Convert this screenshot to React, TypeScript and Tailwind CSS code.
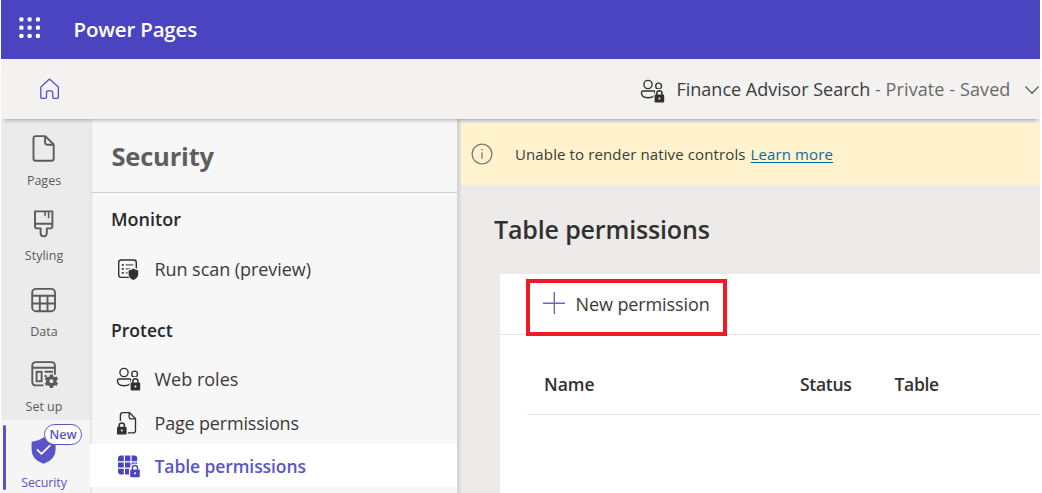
import React from "react";
import type { ReactNode } from "react";

function Lock({ x, y, halo, color = "#323130" }: { x: number; y: number; halo: string; color?: string }) {
  return (
    <g transform={`translate(${x} ${y})`} stroke="none">
      <path d="M-1 4h1.5V3a4.2 4.2 0 0 1 8.6 0v1H11v9H-1z" fill={halo} />
      <path d="M2.4 5V3.4a2.6 2.6 0 0 1 5.2 0V5" fill="none" stroke={color} strokeWidth="1.5" />
      <rect x="0.2" y="4.6" width="9.6" height="7.8" rx="1.2" fill={color} />
      <circle cx="5" cy="8.4" r="1" fill={halo} />
    </g>
  );
}

function WaffleIcon() {
  const stops = [2.4, 10.6, 18.9];
  return (
    <svg width="22" height="22" viewBox="0 0 22 22" fill="#fff">
      {stops.map((y) => stops.map((x) => <rect key={`${x}-${y}`} x={x - 2.1} y={y - 2.1} width="4.2" height="4.2" rx="1.5" />))}
    </svg>
  );
}

function HomeIcon() {
  return (
    <svg width="20" height="22" viewBox="0 0 20 22" fill="none" stroke="#5650c0" strokeWidth="1.3" strokeLinejoin="round">
      <path d="M9 1.5Q9.5 1 10 1.5L17.8 8.4Q18.4 9 18.4 9.8V19Q18.4 20.3 17.1 20.3H13.9Q12.7 20.3 12.7 19V14.6Q12.7 12.8 11 12.8H8.2Q6.5 12.8 6.5 14.6V19Q6.5 20.3 5.3 20.3H2.1Q.8 20.3.8 19V9.8Q.8 9 1.4 8.4Z" />
    </svg>
  );
}

function PeopleLockIcon({ halo }: { halo: string }) {
  return (
    <svg width="26" height="25" viewBox="0 0 26 25" fill="none" stroke="#323130" strokeWidth="1.35">
      <circle cx="8" cy="5.5" r="4.1" />
      <circle cx="18.6" cy="7" r="2.9" />
      <path d="M3.2 12h10.2q1.7 0 1.7 1.8 0 4.9-7 4.9-6.7 0-6.7-4.9Q1.4 12 3.2 12Z" />
      <Lock x={14.4} y={11} halo={halo} />
    </svg>
  );
}

function PageLockIcon() {
  return (
    <svg width="26" height="25" viewBox="0 0 26 25" fill="none" stroke="#323130" strokeWidth="1.35" strokeLinejoin="round">
      <path d="M4.4 10V4.2q0-2.6 2.6-2.6h6.4l6.1 6.1v11.8q0 2.4-2.4 2.4h-5.5" />
      <path d="M13.2 1.8v4.4q0 1.7 1.7 1.7h4.4" />
      <Lock x={0.8} y={11.2} halo="#f7f7f7" />
    </svg>
  );
}

function TableLockIcon() {
  return (
    <svg width="26" height="25" viewBox="0 0 26 25">
      <rect x="2" y="1.4" width="19.2" height="19" rx="3" fill="#4b44c0" />
      <path d="M8.4 1v20M15 1v20M2 7.8h20M2 14.2h20" stroke="#fff" strokeWidth="1.2" />
      <Lock x={14} y={10.8} halo="#ffffff" color="#4b44c0" />
    </svg>
  );
}

function ScanIcon() {
  return (
    <svg width="26" height="25" viewBox="0 0 26 25" fill="none" stroke="#323130" strokeWidth="1.4" strokeLinecap="round">
      <rect x="2.7" y="3" width="17.6" height="17.4" rx="2.6" />
      <path d="M6.6 7.9h.4M6.6 11.900h.4M6.600 15.900h.4" strokeWidth="1.800" />
      <path d="M10.200 7.900h6.600M10.200 11.900h4M10.200 15.900h1.400" stroke="#605e5c" />
      <path d="M17.400 10.400 23 12.600v4.500q0 4.600-5.600 6.900-5.600-2.300-5.600-6.900v-4.500Z" fill="#f7f7f7" stroke="none" />
      <path d="M17.400 11.600q2.100 1.700 4.800 1.900v3.500q0 4.100-4.800 6.100-4.800-2-4.800-6.100v-3.500q2.700-.2 4.800-1.900Z" fill="#323130" stroke="none" />
    </svg>
  );
}

function PagesIcon() {
  return (
    <svg width="30" height="28" viewBox="0 0 30 28" fill="none" stroke="#5c5b5a" strokeWidth="1.9" strokeLinejoin="round">
      <path d="M6.8 1.1h9.5l8.4 8.4v14q0 2.3-2.300 2.300H6.800q-2.300 0-2.300-2.300V3.400q0-2.300 2.300-2.300Z" />
      <path d="M16.100 1.400v6.200q0 2.100 2.100 2.100h6.200" />
    </svg>
  );
}

function StylingIcon() {
  return (
    <svg width="30" height="28" viewBox="0 0 30 28" fill="none" stroke="#5c5b5a" strokeWidth="1.9" strokeLinejoin="round">
      <path d="M6 1.400h17.400v14.800q0 2.200-2.200 2.200h-3.400v4.900a3.100 3.100 0 0 1-6.200 0v-4.900H8.200Q6 18.400 6 16.200ZM6 13.700h17.400" />
      <path d="M16 1.600v4.100M19.600 1.600v6.600" strokeWidth="1.6" />
    </svg>
  );
}

function DataIcon() {
  return (
    <svg width="30" height="28" viewBox="0 0 30 28" fill="none" stroke="#5c5b5a" strokeWidth="1.9">
      <rect x="3.200" y="2.900" width="22.800" height="22.400" rx="3.800" />
      <path d="M3.200 9.800H26M3.200 17.500H26M10.800 9.800v15.500M18.500 9.800v15.500" />
    </svg>
  );
}

function SetupIcon() {
  return (
    <svg width="30" height="28" viewBox="0 0 30 28" fill="none" stroke="#5c5b5a" strokeWidth="1.9">
      <path d="M14.500 24.400H6.900q-3.600 0-3.600-3.600V4.700q0-3.600 3.600-3.600h15.400q3.600 0 3.600 3.600v9.100M3.300 6.800h22.600" />
      <rect x="7.600" y="10.800" width="5" height="9.400" />
      <path d="M15.600 10.800h8.400M15.600 15h2" />
      <path d="M22.400 13.800v12.800M16.900 17l11 6.400M16.900 23.400l11-6.400" stroke="#ebebeb" strokeWidth="5.500" />
      <path d="M22.400 13.400v13.600M16.500 16.800l11.800 6.800M16.500 23.600l11.800-6.800" strokeWidth="3.400" />
      <circle cx="22.400" cy="20.200" r="3.700" strokeWidth="3.200" />
      <circle cx="22.400" cy="20.200" r="1.900" fill="#ebebeb" stroke="none" />
    </svg>
  );
}

function ShieldIcon() {
  return (
    <svg width="30" height="28" viewBox="0 0 30 28" fill="none">
      <path d="M14.600.2q5.400 4 11.100 4.200.9.1.9 1v7.300q0 9.600-11.400 13.800-.7.3-1.300 0Q2.600 22.300 2.600 12.700V5.400q0-.9.9-1Q9.200 4.200 14.600.2Z" fill="#5b54c8" />
      <path d="m8.400 12.800 4.100 4.100 8.300-8.200" stroke="#fff" strokeWidth="1.7" strokeLinecap="round" strokeLinejoin="round" />
    </svg>
  );
}

function RailItem({ icon, label }: { icon: ReactNode; label: string }) {
  return (
    <a className="flex h-[75.25px] flex-col items-center pr-[3px] pt-[16px] text-[12.5px] leading-[20px] text-[#5c5b5a]">
      {icon}
      <span className="mt-[8px]">{label}</span>
    </a>
  );
}

function PanelRow({ icon, children, className = "" }: { icon: ReactNode; children: ReactNode; className?: string }) {
  return (
    <a className={`flex items-center pl-[26px] text-[18px] text-[#3b3a39] ${className}`}>
      {icon}
      <span className="ml-[12.5px] whitespace-nowrap">{children}</span>
    </a>
  );
}

export default function App() {
  return (
    <div className="h-[493px] w-[1042px] overflow-hidden bg-white pl-px pr-[2px] font-['Open_Sans','Noto_Sans',sans-serif]">
      <header className="flex h-[59px] items-center bg-[#4b44c0] pl-[18px]">
        <div className="-mt-[4px]"><WaffleIcon /></div>
        <span className="ml-[32.5px] text-[20.5px] font-semibold tracking-[-0.18px] text-white">Power Pages</span>
      </header>

      <div className="relative z-10 flex h-[60px] items-center bg-[#f3f2f1] pl-[38.5px] shadow-[0_4px_4px_-3px_rgba(0,0,0,0.3)]">
        <HomeIcon />
        <div className="ml-[580.5px] mt-[5px]"><PeopleLockIcon halo="#f3f2f1" /></div>
        <span className="ml-[10.5px] whitespace-nowrap text-[18px] text-[#3b3a39]">
          Finance Advisor Search<span className="tracking-[0.1px] text-[#6b6968]"> - Private - Saved</span>
        </span>
        <svg className="ml-[13.5px] mt-[2px] shrink-0" width="16" height="10" viewBox="0 0 16 10" fill="none" stroke="#605e5c" strokeWidth="1.3">
          <path d="m1.500 1.500 6.500 6.700 6.500-6.700" />
        </svg>
      </div>

      <div className="flex h-[374px]">
        <nav className="w-[89px] shrink-0 bg-[#ebebeb]">
          <RailItem icon={<PagesIcon />} label="Pages" />
          <RailItem icon={<StylingIcon />} label="Styling" />
          <RailItem icon={<DataIcon />} label="Data" />
          <RailItem icon={<SetupIcon />} label="Set up" />
          <a className="relative flex h-[75px] flex-col items-center bg-[#f5f5f5] pr-[3px] pt-[17px] text-[12.5px] leading-[20px] text-[#5b54c8]">
            <span className="absolute left-[2px] top-[5px] h-[65px] w-[3px] rounded-full bg-[#5b54c8]" />
            <ShieldIcon />
            <span className="absolute left-[43px] top-[4px] flex h-[21px] w-[38px] items-center justify-center rounded-full border border-[#5b54c8] bg-white pt-px text-[12.5px] font-semibold">New</span>
            <span className="mt-[8px] tracking-[-0.1px]">Security</span>
          </a>
        </nav>

        <aside className="w-[367px] shrink-0 bg-[#f7f7f7] shadow-[inset_3px_0_3px_-2px_rgba(0,0,0,0.12)]">
          <h1 className="h-[74px] border-b border-[#d2d0ce] pl-[21.5px] text-[25.5px] font-bold leading-[74px] tracking-[-0.2px] text-[#605e5c]">Security</h1>
          <h2 className="pl-[21px] text-[18px] font-semibold leading-[53px] text-[#292827]">Monitor</h2>
          <PanelRow icon={<ScanIcon />} className="h-[47px] tracking-[-0.06px]">Run scan (preview)</PanelRow>
          <h2 className="mt-[16px] pl-[21px] text-[17.5px] font-semibold leading-[43px] text-[#292827]">Protect</h2>
          <PanelRow icon={<PeopleLockIcon halo="#f7f7f7" />} className="mt-[6px] h-[43px]">Web roles</PanelRow>
          <PanelRow icon={<PageLockIcon />} className="h-[43px] pt-[2px] tracking-[-0.18px]">Page permissions</PanelRow>
          <PanelRow icon={<TableLockIcon />} className="h-[43px] bg-white pt-[2px]">
            <span className="text-[17.5px] font-semibold tracking-[-0.08px] text-[#5b54c8]">Table permissions</span>
          </PanelRow>
        </aside>

        <main className="min-w-0 grow bg-[#ecebe9] shadow-[inset_4px_0_3px_-1px_rgba(0,0,0,0.1)]">
          <div className="ml-[4px] mt-[4px] flex h-[62px] items-center bg-[#fff3cd] pl-[10px] text-[15px] tracking-[0.12px] text-[#3b3a39]">
            <svg width="22" height="22" viewBox="0 0 22 22" fill="none" stroke="#797775" strokeWidth="1.3">
              <circle cx="11" cy="11" r="9.9" />
              <path d="M11 9.300v6.400M11 6v1.600" />
            </svg>
            <span className="ml-[22px]">Unable to render native controls</span>
            <a className="ml-[5px] text-[#1267a5] underline underline-offset-2">Learn more</a>
          </div>
          <h2 className="h-[89px] pl-[37px] text-[25px] font-semibold leading-[89px] tracking-[-0.15px] text-[#323130]">Table permissions</h2>

          <section className="relative ml-[43px] h-[219px] bg-white">
            <div className="flex h-[61px] items-center border-b border-[#e5e5e5] pl-[43px]">
              <svg className="-mt-[3px]" width="22" height="22" viewBox="0 0 22 22" stroke="#6b64cf" strokeWidth="1.4">
                <path d="M0 11.200h22M11.300 0v22" />
              </svg>
              <span className="ml-[10.5px] text-[18px] tracking-[-0.1px] text-[#3b3a39]">New permission</span>
            </div>
            <div className="ml-[27px] grid h-[80px] grid-cols-[256px_94.5px_1fr] border-b border-[#e5e5e5] pl-[17px] pt-[20px] text-[17.5px] font-semibold leading-[58px] text-[#323130]">
              <span>Name</span>
              <span className="tracking-[-0.3px]">Status</span>
              <span className="tracking-[-0.3px]">Table</span>
            </div>
            <div className="absolute left-[26px] top-[5px] h-[57px] w-[201px] border-4 border-[#ed1c24]" />
          </section>
        </main>
      </div>
    </div>
  );
}
